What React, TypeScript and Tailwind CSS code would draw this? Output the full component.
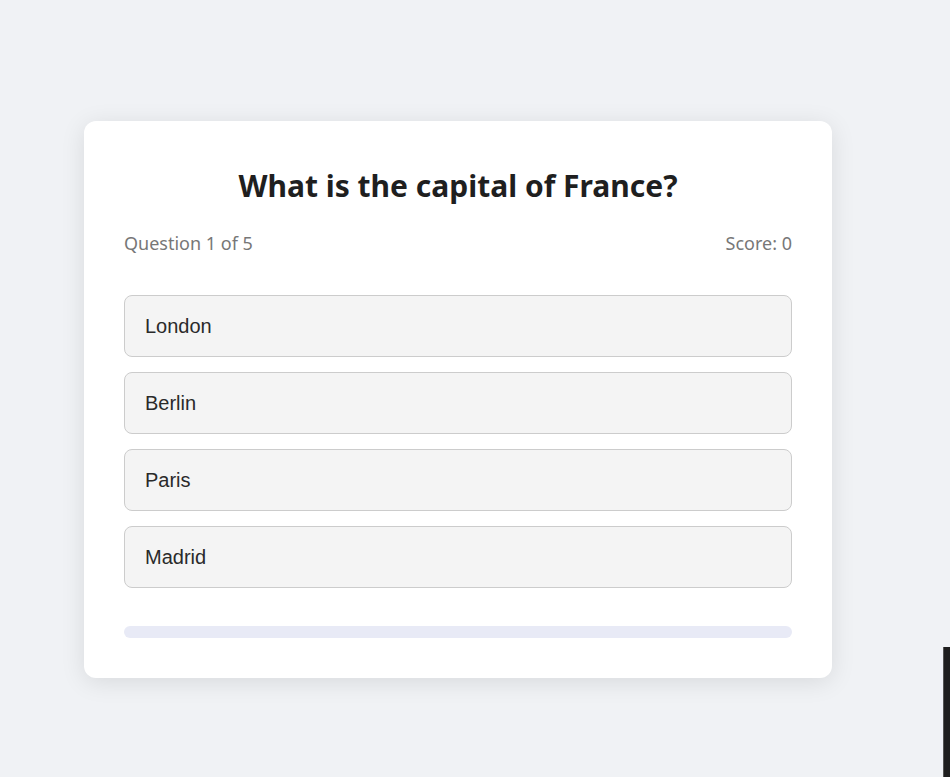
const options = ["London", "Berlin", "Paris", "Madrid"];

export default function App() {
  return (
    <div className="min-h-screen bg-[#f0f2f5] pt-[121px] pl-[84px] font-['Noto_Sans','Open_Sans',sans-serif]">
      <div className="w-[748px] rounded-xl bg-white p-10 shadow-[0_4px_24px_rgba(0,0,0,0.1)]">
        <h1 className="mt-1 text-center text-[30px] font-bold leading-[42px] text-[#1f1f1f]">
          What is the capital of France?
        </h1>
        <div className="mt-[24px] flex justify-between text-[18px] leading-6 text-[#777]">
          <span>Question 1 of 5</span>
          <span>Score: 0</span>
        </div>
        <div className="mt-[40px] flex flex-col gap-[15px]">
          {options.map((o) => (
            <button
              key={o}
              className="h-[62px] rounded-lg border border-[#cccccc] bg-[#f4f4f4] px-5 text-left font-['Liberation_Sans',Arial,sans-serif] text-[20px] text-[#2a2a2a]"
            >
              {o}
            </button>
          ))}
        </div>
        <div className="mt-[38px] h-3 w-full rounded-md bg-[#e8eaf6]" />
      </div>
      <div className="fixed right-0 top-[647px] h-[130px] w-[7px] border-l border-[#555] bg-[#1e1e1e]" />
    </div>
  );
}
